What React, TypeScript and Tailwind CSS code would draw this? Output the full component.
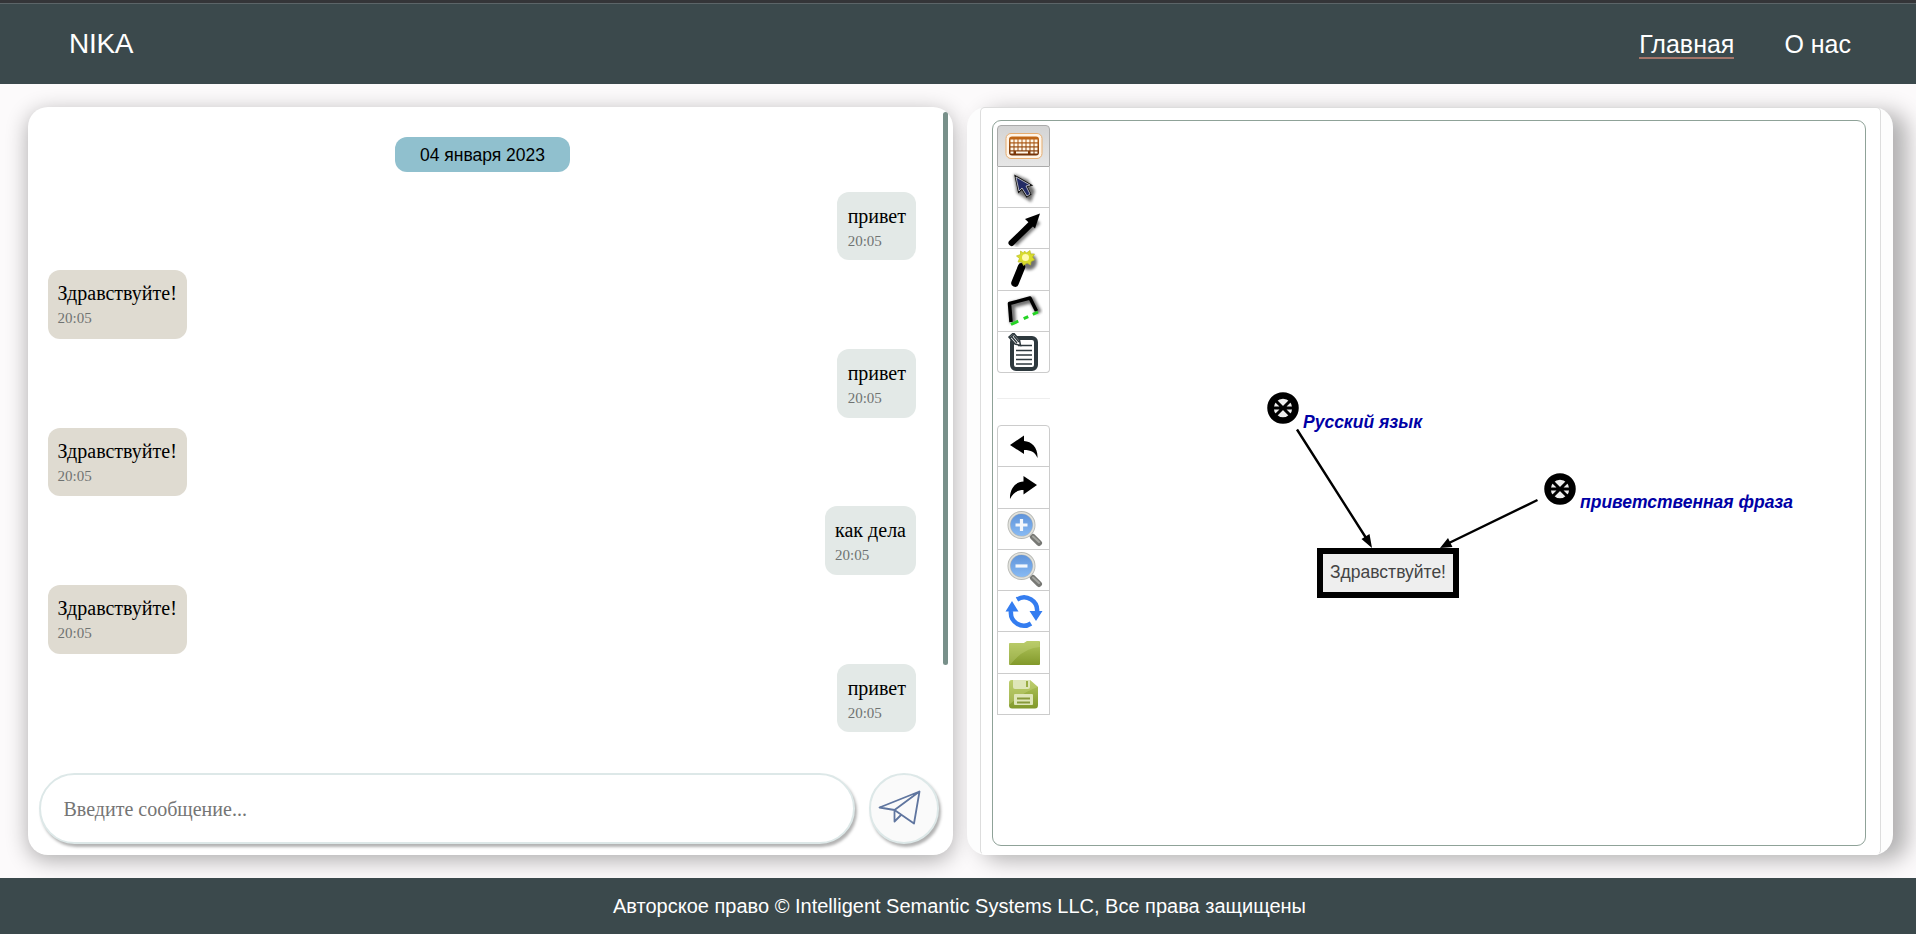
import React from "react";

type Message = { text: string; mine: boolean };

const messages: Message[] = [
  { text: "привет", mine: true },
  { text: "Здравствуйте!", mine: false },
  { text: "привет", mine: true },
  { text: "Здравствуйте!", mine: false },
  { text: "как дела", mine: true },
  { text: "Здравствуйте!", mine: false },
  { text: "привет", mine: true },
];

function Header() {
  return (
    <header className="flex h-[84px] shrink-0 items-center justify-between border-t-[3px] border-[#343538] bg-[#3b494c] pr-16 pl-[69px] text-white shadow-[inset_0_1px_0_#5c6568]">
      <div className="text-[28px] leading-8 tracking-[-0.3px]">NIKA</div>
      <nav className="flex gap-[50px] pr-px text-[25px]">
        <a className="border-b-2 border-[#a5766a] pt-[3px] leading-[26px]">Главная</a>
        <a className="border-b-2 border-transparent pt-[3px] leading-[26px]">О нас</a>
      </nav>
    </header>
  );
}

function Bubble({ message }: { message: Message }) {
  return (
    <div
      className={
        message.mine
          ? "h-[68.7px] self-end rounded-xl bg-[#e3e9e7] pt-[13px] pr-2.5 pl-[10.500px]"
          : "h-[68.7px] self-start rounded-xl bg-[#dfdbd1] pt-3 pr-2.5 pl-[9.600px]"
      }
    >
      <div className="text-[20px] leading-[22px] text-black">{message.text}</div>
      <div className="mt-1.5 text-[15px] leading-[17px] text-[#6f7372]">20:05</div>
    </div>
  );
}

function Chat() {
  return (
    <section className="flex w-[925px] flex-col rounded-[20px] bg-white font-['Liberation_Serif',serif] shadow-[0_5px_22px_rgba(0,0,0,0.32)]">
      <div className="flex h-[642px] justify-between pt-[5px] pr-[5px] pl-5">
        <div className="flex w-[868px] flex-col gap-2.5 pt-[25px]">
          <div className="mb-[9.600px] flex h-[35px] w-[175px] items-center justify-center self-center rounded-xl bg-[#90c0ce] pl-px font-['Liberation_Sans',sans-serif] text-[17.500px] leading-5 text-black">
            04 января 2023
          </div>
          {messages.map((message, i) => (
            <Bubble key={i} message={message} />
          ))}
        </div>
        <div className="h-[553px] w-[5px] rounded-full bg-[#78908a]" />
      </div>
      <div className="mt-6 flex justify-between pr-3.5 pl-[11px]">
        <input
          placeholder="Введите сообщение..."
          className="h-[71px] w-[816px] rounded-full border-2 border-[#dde8e8] bg-white px-[22.500px] pt-px text-[20px] shadow-[2px_3px_3px_rgba(0,0,0,0.3)] placeholder:text-[#757575]"
        />
        <button className="flex h-[71px] w-[70px] items-center justify-center rounded-full border-2 border-[#dde8e8] bg-[#fafafa] pr-2 pb-1 shadow-[2px_3px_3px_rgba(0,0,0,0.3)]">
          <svg width="44" height="38" viewBox="0 0 44 38" fill="none" stroke="#5f759f" strokeWidth="1.8" strokeLinejoin="round">
            <path d="M1.500 19.500L41.500 3.500L36 35.500L16.500 22ZL16.500 22L41.500 3.500M16.500 22V33.500L23 27" />
          </svg>
        </button>
      </div>
    </section>
  );
}

const Keyboard = () => (
  <svg width="38" height="38" viewBox="0 0 38 38">
    <defs>
      <linearGradient id="kb" x2="0" y2="1">
        <stop stopColor="#c56a18" />
        <stop offset="1" stopColor="#713107" />
      </linearGradient>
    </defs>
    <rect x="1" y="6.500" width="36" height="25" rx="5" fill="#fff5e8" stroke="#e6ad71" />
    <rect x="4" y="9.500" width="30" height="19" rx="3" fill="url(#kb)" />
    <g fill="#fff8e9">
      {[12.5, 16.5, 20.5].map((y) =>
        [6, 10, 14, 18, 22, 26, 30].map((x) => (
          <rect key={x + "-" + y} x={x - 0.5} y={y} width="3" height="2.8" />
        ))
      )}
      <path d="M5.500 24.500h3v2h-3zM11 24.500h12v2H11zM25.500 24.500h3v2h-3zM29.500 24.500h3v2h-3z" />
    </g>
  </svg>
);

const Cursor = () => (
  <svg width="38" height="38" viewBox="0 0 38 38">
    <g transform="translate(1 3)">
      <path d="M8 3L22 9L29 20L25 31L11 22Z" fill="#111" opacity=".6" filter="url(#soft)" />
      <path d="M10 6L13 20L16 17L21 25L24 23L20 15L24 14Z" fill="#222b65" stroke="#111" strokeWidth="2.500" />
      <path d="M10 6L13 20L16 17L21 25L24 23L20 15L24 14Z" fill="#222b65" stroke="#d5d6d8" strokeWidth=".8" />
    </g>
  </svg>
);

const Line = () => (
  <svg width="38" height="38" viewBox="0 0 38 38">
    <path d="M9 35L33 12" stroke="#000" strokeWidth="7" opacity=".5" filter="url(#soft)" />
    <path d="M6.500 34L27 14" stroke="#000" strokeWidth="6" strokeLinecap="round" />
    <path d="M35 4.500L20 10L30 19.500Z" fill="#000" />
  </svg>
);

const Wand = () => (
  <svg width="38" height="38" viewBox="0 0 38 38">
    <circle cx="24" cy="12" r="8" opacity=".55" filter="url(#soft)" />
    <path d="M10 33L16.500 17" stroke="#000" strokeWidth="7.500" strokeLinecap="round" />
    <path
      d="M19.500 1L21.500 3L25 .5L25.500 4L29.500 4L27.500 7L29.500 10L26 11.500L25.500 15L22 13L18.500 15.500L17 12L13 12L14.500 8.500L11.500 6L15.500 4.500L15.500 1L18.500 3Z"
      fill="#d9dc2d"
      stroke="#bbbf22"
      strokeWidth=".7"
    />
    <circle cx="20.500" cy="7.500" r="3.500" fill="#fffbb0" />
  </svg>
);

const Contour = () => (
  <svg width="38" height="38" viewBox="0 0 38 38" fill="none">
    <path d="M8 31L7 13L27 8L34 21" stroke="#000" strokeWidth="6" opacity=".55" filter="url(#soft)" />
    <path d="M6 30L4.500 11.500L25 6L31.500 19" stroke="#000" strokeWidth="3.500" strokeLinejoin="round" />
    <path d="M6 32.500L33 20" stroke="#25d425" strokeWidth="3" strokeDasharray="8 6 5 5" />
  </svg>
);

const Note = () => (
  <svg width="38" height="38" viewBox="0 0 38 38">
    <rect x="7" y="5" width="24" height="31" rx="4" fill="#fff" stroke="#2e393e" strokeWidth="4" />
    <path d="M13 12.500H27M11 17.500H27M11 22H27M11 26.500H27M11 31H27" stroke="#2e393e" strokeWidth="1.600" />
    <path d="M4 4L8.500 0L14.500 7L15.500 12.500L10 11Z" fill="#fff" stroke="#2e393e" strokeWidth="1.500" />
    <path d="M5 5L9.500 1M7 4L12 10M9 3L14 9" stroke="#2e393e" strokeWidth="1.400" />
  </svg>
);

const Undo = () => (
  <svg width="38" height="38" viewBox="0 0 38 38">
    <path d="M5 18L19 8.500V14C27 14.500 33 21 32.500 31C30 25 26 23 19 23V27Z" />
  </svg>
);

const Redo = () => (
  <svg width="38" height="38" viewBox="0 0 38 38">
    <path d="M32 17L18.500 8V13.500C10 14 4.500 21 5 31C8 25 12 22 18.500 22V26.500Z" />
  </svg>
);

const Zoom = ({ plus }: { plus?: boolean }) => (
  <svg width="38" height="38" viewBox="0 0 38 38">
    <defs>
      <linearGradient id="lens" x2="0" y2="1">
        <stop stopColor="#5d91d8" />
        <stop offset="1" stopColor="#8bbdf5" />
      </linearGradient>
    </defs>
    <path d="M25 25L29 29" stroke="#aaa" strokeWidth="3" />
    <path d="M28 27L34 33" stroke="#777874" strokeWidth="6" strokeLinecap="round" />
    <path d="M28 26.500L34 32" stroke="#a4a5a0" strokeWidth="2" strokeLinecap="round" />
    <circle cx="16.500" cy="15" r="12.500" fill="url(#lens)" stroke="#b9bab5" strokeWidth="3" />
    <circle cx="16.500" cy="15" r="12.300" fill="none" stroke="#e2e3df" strokeWidth="1.600" />
    <path d={plus ? "M10.500 15H22.500M16.500 9V21" : "M10.500 15H22.500"} stroke="#f3f7fc" strokeWidth="3.200" />
  </svg>
);

const Refresh = () => (
  <svg width="38" height="38" viewBox="0 0 38 38">
    <path d="M12 7.500A13 13 0 0 1 32 20M26 31.500A13 13 0 0 1 6 19" fill="none" stroke="#347df0" strokeWidth="4.500" />
    <path d="M24.500 19H37.500L31 29ZM.5 19.500H13.500L7 9Z" fill="#347df0" />
  </svg>
);

const Folder = () => (
  <svg width="38" height="38" viewBox="0 0 38 38">
    <defs>
      <linearGradient id="green" x2="0" y2="1">
        <stop stopColor="#b2c65d" />
        <stop offset="1" stopColor="#82992b" />
      </linearGradient>
    </defs>
    <path d="M4 10Q4 9 5 9H19L22 7H34Q35 7 35 8V30Q35 31 34 31H5Q4 31 4 30Z" fill="url(#green)" />
    <path d="M4 31V10Q4 9 5 9H19L22 7H34L35 13Q18 14 5 31Z" fill="#d2de8a" opacity=".3" />
  </svg>
);

const Save = () => (
  <svg width="38" height="38" viewBox="0 0 38 38">
    <path d="M4 8Q4 5 7 5H25L33 12V30Q33 33.500 30 33.500H7Q4 33.500 4 30Z" fill="url(#green)" />
    <path d="M4 30V8Q4 5 7 5H25L33 12Q18 17 4 30Z" fill="#d2de8a" opacity=".35" />
    <path d="M8 5H25V12Q25 14 23 14H10Q8 14 8 12Z" fill="#dfe6b9" />
    <path d="M22 6V12" stroke="#99ac43" strokeWidth="2" />
    <rect x="9" y="19" width="19" height="11" rx="1" fill="#dfe6b9" />
    <path d="M12 23.500H25M12 27.500H25" stroke="#87993a" strokeWidth="1.800" />
  </svg>
);

const tools = [Keyboard, Cursor, Line, Wand, Contour, Note];
const actions = [Undo, Redo, () => <Zoom plus />, () => <Zoom />, Refresh, Folder, Save];

function Toolbar() {
  return (
    <div className="mt-1 ml-1 w-[53px]">
      {tools.map((Icon, i) => (
        <button
          key={i}
          className={
            i === 0
              ? "flex h-[42px] w-full items-center justify-center rounded-t border border-[#aaa] bg-linear-to-b from-[#d4d4d4] to-[#e6e6e6]"
              : "-mt-px flex h-[42.200px] w-full items-center justify-center border border-t-0 border-[#ccc] pt-px nth-[6]:rounded-b"
          }
        >
          <Icon />
        </button>
      ))}
      <div className="mt-[25px] mb-[27px] h-px bg-[#eee]" />
      {actions.map((Icon, i) => (
        <button
          key={i}
          className="-mt-px flex h-[42.300px] w-full items-center justify-center border border-[#ccc] nth-[8]:rounded-t"
        >
          <Icon />
        </button>
      ))}
    </div>
  );
}

function Node() {
  return (
    <svg width="32" height="32" viewBox="0 0 32 32" className="block">
      <circle cx="16" cy="16" r="12.500" fill="#eee" stroke="#000" strokeWidth="6.500" />
      <path d="M6 16H26M9 9L23 23M23 9L9 23" stroke="#000" strokeWidth="3" />
    </svg>
  );
}

function Graph() {
  return (
    <div className="absolute inset-0 font-['Liberation_Sans',sans-serif]">
      <svg className="absolute inset-0 h-full w-full" stroke="#000" strokeWidth="2.400">
        <path d="M304 308.500L375 420M544.500 379L456 422" />
        <path d="M379 427L368.500 418L376.500 413Z M447 427L455 417L459.500 426Z" strokeWidth="0" />
      </svg>
      <div className="absolute top-[271px] left-[274px]"><Node /></div>
      <div className="absolute top-[352px] left-[551px]"><Node /></div>
      <div className="absolute top-[291px] left-[310px] text-[17.500px] leading-5 font-bold whitespace-nowrap text-[#0000a5] italic">Русский язык</div>
      <div className="absolute top-[371px] left-[587px] text-[17.500px] leading-5 font-bold whitespace-nowrap text-[#0000a5] italic">приветственная фраза</div>
      <div className="absolute top-[427px] left-[324px] flex h-[50px] w-[142px] items-center justify-center border-[6px] border-black bg-[#eee] pb-0.5 text-[17.500px] leading-5 text-[#444]">
        Здравствуйте!
      </div>
    </div>
  );
}

function Editor() {
  return (
    <section className="w-[926px] rounded-[20px] bg-[#fdfdfd] pr-3 pl-[13px] shadow-[14px_5px_22px_rgba(0,0,0,0.3)]">
      <div className="h-full rounded-[5px] border border-[#ddd] border-b-transparent bg-white pt-3 pr-3.5 pl-[11px]">
        <div className="relative h-[726px] rounded-[9px] border border-[#8fa298]">
          <Graph />
          <div className="relative flex">
            <Toolbar />
          </div>
        </div>
      </div>
    </section>
  );
}

export default function App() {
  return (
    <div className="flex h-[934px] w-[1916px] flex-col overflow-hidden bg-[#fcfafb] font-['Liberation_Sans',sans-serif]">
      <svg width="0" height="0" className="absolute">
        <filter id="soft" x="-50%" y="-50%" width="200%" height="200%">
          <feGaussianBlur stdDeviation="1.800" />
        </filter>
      </svg>
      <Header />
      <main className="flex h-[794px] gap-3.5 pt-[23px] pb-[23px] pl-7">
        <Chat />
        <Editor />
      </main>
      <footer className="z-10 flex h-14 shrink-0 items-center justify-center bg-[#3b494c] pl-[3px] text-[20px] text-white">
        Авторское право © Intelligent Semantic Systems LLC, Все права защищены
      </footer>
    </div>
  );
}
